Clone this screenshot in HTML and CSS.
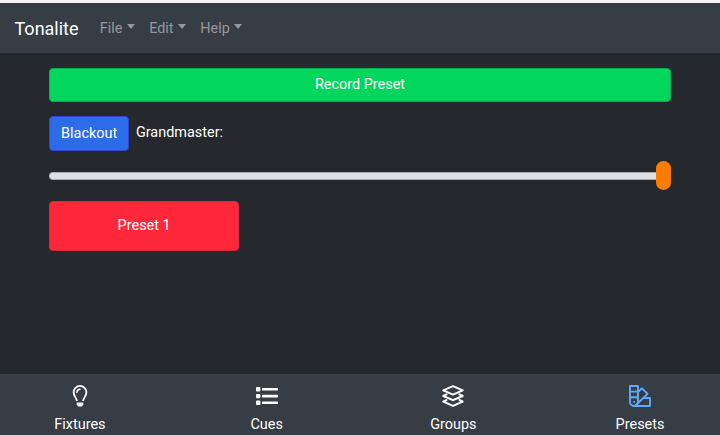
FILE: index.html
```html
<!DOCTYPE html>
<html lang="en">
<head>
<meta charset="utf-8">
<title>Tonalite</title>
<link rel="stylesheet" href="styles.css">
</head>
<body>
<div class="app">
  <header class="navbar">
    <span class="brand">Tonalite</span>
    <nav class="menu">
      <span class="menu-item">File</span>
      <span class="menu-item">Edit</span>
      <span class="menu-item">Help</span>
    </nav>
  </header>
  <main class="content">
    <button class="btn record">Record Preset</button>
    <div class="controls">
      <button class="btn blackout">Blackout</button>
      <span class="label">Grandmaster:</span>
    </div>
    <div class="slider"><div class="track"></div><div class="thumb"></div></div>
    <button class="btn preset">Preset 1</button>
  </main>
  <footer class="tabs">
    <div class="tab">
      <svg class="icon" viewBox="0 0 22 22" fill="none" stroke="currentColor">
        <path d="M7.9 16C7.9 13.3 4.6 11.5 4.6 7.3a6.4 6.4 0 0 1 12.8 0C17.4 11.5 14.1 13.3 14.1 16" stroke-width="1.8"/>
        <path d="M7.8 7.5A3.4 3.4 0 0 1 11 4.3" stroke-width="1.4" stroke-linecap="round"/>
        <path d="M7.7 17.4h6.6v2L13 21.6H9l-1.3-2.2z" fill="currentColor" stroke="none"/>
      </svg>
      <span>Fixtures</span>
    </div>
    <div class="tab">
      <svg class="icon" viewBox="0 0 22 22" fill="currentColor">
        <rect x="0" y="2.1" width="4.4" height="4.4" rx="1"/><rect x="0" y="8.9" width="4.4" height="4.4" rx="1"/><rect x="0" y="15.6" width="4.4" height="4.4" rx="1"/>
        <rect x="6" y="3" width="16" height="2.6" rx=".7"/><rect x="6" y="9.8" width="16" height="2.6" rx=".7"/><rect x="6" y="16.5" width="16" height="2.6" rx=".7"/>
      </svg>
      <span>Cues</span>
    </div>
    <div class="tab">
      <svg class="icon" viewBox="0 0 22 22" fill="none" stroke="currentColor" stroke-width="2" stroke-linejoin="round" stroke-linecap="round">
        <path d="M11 1.2 20.7 5.4 11 9.6 1.3 5.4z"/>
        <path d="M4.5 9.4 1.3 11 11 15.2 20.7 11 17.5 9.4"/>
        <path d="M4.5 15 1.3 16.6 11 20.8 20.7 16.6 17.5 15"/>
      </svg>
      <span>Groups</span>
    </div>
    <div class="tab">
      <svg class="icon active" viewBox="0 0 22 22" fill="none" stroke="currentColor" stroke-width="1.9" stroke-linejoin="round">
        <path d="M1 1h8v16a4 4 0 0 1-8 0zM1 6.6h8M1 12.3h8"/>
        <path d="M9 7.1 13 3.3 18.6 8.9 6.2 20.8"/>
        <path d="M14.4 13H21v8H5"/>
        <circle cx="5" cy="17" r="1.1" fill="currentColor" stroke="none"/>
      </svg>
      <span>Presets</span>
    </div>
  </footer>
</div>
</body>
</html>
```

FILE: styles.css
```css
* { box-sizing: border-box; }
body {
  margin: 0;
  background: #f2f2f2;
  color: #fff;
  font: 14.45px/22px Roboto, "Liberation Sans", sans-serif;
}
.app {
  height: 436px;
  display: flex;
  flex-direction: column;
  border-top: 3px solid #f2f2f2;
  border-bottom: 1px solid #d5d7d9;
  background: #25282d;
}
.navbar {
  height: 50px;
  display: flex;
  align-items: center;
  padding: 0 14.5px;
  background: #373d45;
}
.brand { font-size: 18px; margin: 2px 21.3px 0 0; }
.menu { display: flex; gap: 14.6px; margin-top: 2px; color: #94979b; }
.menu-item { display: flex; }
.menu-item::after {
  content: "";
  margin: 6px 0 0 4px;
  height: 0;
  border: 4.5px solid transparent;
  border-width: 5px 4.5px 0;
  border-top-color: currentColor;
}
.content { flex: 1; padding: 15px 49.4px 0; }
.btn {
  display: block;
  padding: 0;
  border: 1px solid;
  border-radius: 4px;
  color: #fff;
  font: inherit;
}
.record {
  width: 100%;
  height: 34px;
  background: #02d65c;
  border-color: #08b150;
}
.controls { display: flex; margin-top: 14px; }
.blackout {
  width: 79.5px;
  height: 35px;
  padding-top: 1px;
  background: #2c6ce9;
  border-color: #3542d4;
}
.label { margin: 6px 0 0 7px; }
.slider { display: flex; align-items: center; height: 29px; margin-top: 10.4px; }
.track {
  flex: 1;
  height: 8px;
  border: 1px solid #a9acb3;
  border-radius: 4px 0 0 4px;
  border-right: 0;
  background: #dee0e8;
}
.thumb { width: 14.7px; height: 28.8px; border-radius: 7.3px; background: #ff7c00; }
.preset {
  width: 189.5px;
  height: 50px;
  margin-top: 10.6px;
  background: #ff283b;
  border-color: #d92838;
}
.tabs {
  height: 61px;
  display: grid;
  grid-template-columns: repeat(4, 186.7px);
  margin: 0 -13.4px;
  background: #373d45;
}
.tab { display: flex; flex-direction: column; align-items: center; padding-top: 11px; }
.icon { width: 22px; height: 22px; margin-bottom: 7px; }
.active { color: #60abf8; }
```
